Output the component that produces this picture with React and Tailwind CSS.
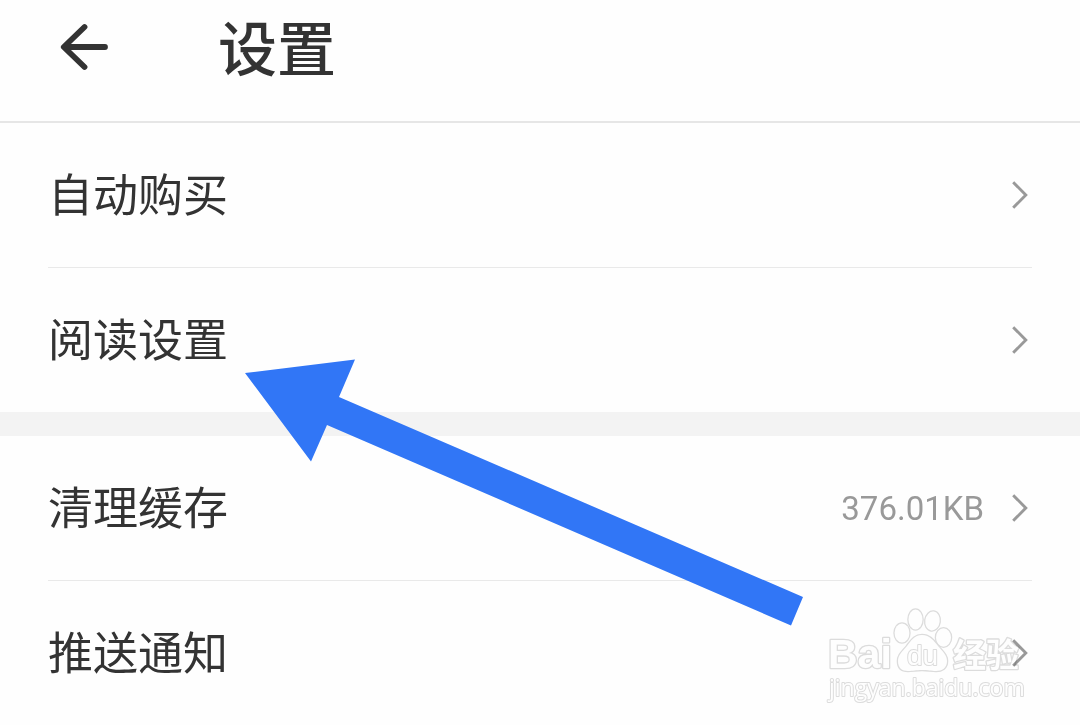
import React from 'react';

const groups = [
  [{ label: '自动购买' }, { label: '阅读设置' }],
  [{ label: '清理缓存', value: '376.01KB' }, { label: '推送通知' }],
];

const BackIcon = () => (
  <svg
    width="48"
    height="48"
    viewBox="0 0 48 48"
    fill="none"
    stroke="currentColor"
    strokeWidth="5.8"
    strokeLinecap="round"
    strokeLinejoin="round"
    aria-hidden="true"
  >
    <path d="M24.5 4 3.800 24l20.700 20M5 24h40" />
  </svg>
);

const ChevronIcon = () => (
  <svg
    width="20"
    height="32"
    viewBox="0 0 20 32"
    fill="none"
    stroke="currentColor"
    strokeWidth="2.900"
    aria-hidden="true"
  >
    <path d="M1.200 3.200 13.800 16 1.200 28.800" />
  </svg>
);

const SettingRow = ({ label, value }) => (
  <li className="mx-12 border-b border-[#e9e9e9] last:border-b-0">
    <button
      type="button"
      className="flex h-36 w-full items-center justify-between text-left"
    >
      <span className="pb-1.5 text-[45px] leading-none text-[#333333]">
        {label}
      </span>
      <span className="flex items-center gap-7 text-[#999999]">
        {value && (
          <span className="font-[Roboto,sans-serif] text-[33px] leading-none">
            {value}
          </span>
        )}
        <ChevronIcon />
      </span>
    </button>
  </li>
);

const PointerArrow = () => (
  <svg
    className="pointer-events-none absolute left-[245px] top-[359px]"
    width="560"
    height="268"
    viewBox="0 0 560 268"
    aria-hidden="true"
  >
    <path
      d="M0 14 110 0.500 94 38 558 238 546 266.500 82 66 66 102.500Z"
      fill="#3176f6"
    />
  </svg>
);

// multiply keeps the chevron visible through the white letters
const Watermark = () => (
  <svg
    className="pointer-events-none absolute bottom-5 right-12 mix-blend-multiply"
    width="210"
    height="100"
    viewBox="0 0 210 100"
    fill="#ffffff"
    stroke="#dddddd"
    strokeWidth="2.600"
    strokeLinejoin="round"
    paintOrder="stroke"
  >
    <text x="6" y="63" fontSize="41" fontWeight="700" fontFamily="'Liberation Sans', sans-serif">
      Bai
    </text>
    <ellipse cx="80" cy="28" rx="7.400" ry="9.400" />
    <ellipse cx="93.500" cy="14.500" rx="7" ry="10" />
    <ellipse cx="110.500" cy="16" rx="7.200" ry="9.500" transform="rotate(8 110.500 16)" />
    <ellipse cx="121.500" cy="32.500" rx="7.500" ry="9.200" />
    <path d="M100 30c8 0 12 6 16 11 5 6 9 9 9 15 0 7-5 10-11 10-5 0-8-1-14-1s-9 1-14 1c-6 0-10-3-10-10 0-6 4-9 9-15 4-5 7-11 15-11Z" />
    <text x="85" y="60" fontSize="28" strokeWidth="2" fontFamily="'Liberation Sans', sans-serif">
      du
    </text>
    <text x="131" y="62" fontSize="33" fontWeight="700" fontFamily="'Noto Sans CJK SC', sans-serif">
      经验
    </text>
    <text x="7" y="91" fontSize="23" strokeWidth="2" fontFamily="'Open Sans', sans-serif">
      jingyan.baidu.com
    </text>
  </svg>
);

const App = () => {
  return (
    <div
      lang="zh-CN"
      className="relative overflow-hidden bg-[#fefefe] font-['Noto_Sans_CJK_SC',sans-serif]"
    >
      <header className="flex h-[123px] items-center gap-[110px] border-b-2 border-[#e6e6e6] pb-7 pl-[60px]">
        <button type="button" aria-label="返回" className="text-[#333333]">
          <BackIcon />
        </button>
        <h1 className="pb-0.5 text-[59px] font-medium leading-none text-[#333333]">
          设置
        </h1>
      </header>
      <main className="flex flex-col gap-6 bg-[#f3f3f3]">
        {groups.map((rows) => (
          <ul key={rows[0].label} className="bg-[#fefefe]">
            {rows.map((row) => (
              <SettingRow key={row.label} {...row} />
            ))}
          </ul>
        ))}
      </main>
      <PointerArrow />
      <Watermark />
    </div>
  );
};

export default App;
